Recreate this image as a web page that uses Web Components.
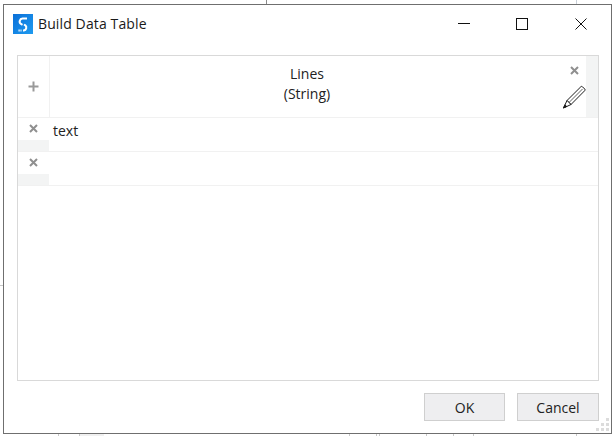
<!DOCTYPE html>
<html>
<head>
<meta charset="utf-8">
<title>Build Data Table</title>
<style>
  html, body { margin: 0; height: 100%; background: #fff; overflow: hidden; }
  body { font-family: "Open Sans", sans-serif; }
</style>
</head>
<body>
<desktop-lines></desktop-lines>
<dialog-window heading="Build Data Table">
  <data-table>
    <table-header name="Lines" type="(String)"></table-header>
    <table-row value="text"></table-row>
    <table-row></table-row>
  </data-table>
  <dialog-button slot="actions">OK</dialog-button>
  <dialog-button slot="actions" style="width:82px">Cancel</dialog-button>
</dialog-window>

<script>
const CROSS = `<svg width="9" height="9" viewBox="0 0 9 9"><path d="M1 1l7 7M8 1l-7 7" stroke="#8f8f8f" stroke-width="2" fill="none"/></svg>`;
const PLUS = `<svg width="11" height="11" viewBox="0 0 11 11"><path d="M5.5 .5v10M.5 5.5h10" stroke="#9a9a9a" stroke-width="2" fill="none"/></svg>`;
const PENCIL = `<svg width="24" height="24" viewBox="0 0 24 24" fill="none" stroke="#1c1c1c" stroke-width="1"><path d="M5 15.5L18.8 1.8a1.2 1.2 0 0 1 1.7 0l2.2 2.2a1.2 1.2 0 0 1 0 1.7L9 19.5z"/><path d="M7 17.5L20.5 4" stroke-width=".7"/><path d="M5 15.5L1.5 23 9 19.5z" fill="#fff"/><path d="M3 19.8L1.5 23l3.2-1.5z" fill="#111"/></svg>`;

// background windows peeking out around the dialog
class DesktopLines extends HTMLElement {
  constructor() {
    super();
    this.attachShadow({ mode: "open" });
    const lines = [
      [266, 0, 1, 4, "#8a8a8a"], [576, 0, 1, 4, "#c9d0d8"], [0, 285, 3, 1, "#c8c8c8"],
      [58, 434, 1, 2, "#c8c8c8"], [79, 434, 1, 2, "#c8c8c8"], [80, 434, 24, 2, "#f0f0f0"],
      [349, 434, 1, 2, "#c8c8c8"], [376, 434, 1, 2, "#c8c8c8"], [379, 434, 1, 2, "#c8c8c8"],
      [426, 434, 1, 2, "#c8c8c8"], [453, 434, 1, 2, "#c8c8c8"], [473, 434, 1, 2, "#c8c8c8"],
      [576, 434, 1, 2, "#c8c8c8"]
    ];
    this.shadowRoot.innerHTML = `
      <style>
        :host { position: absolute; inset: 0; display: block; }
        i { position: absolute; display: block; }
      </style>
      ${lines.map(([x, y, w, h, c]) => `<i style="left:${x}px;top:${y}px;width:${w}px;height:${h}px;background:${c}"></i>`).join("")}
    `;
  }
}

class DialogWindow extends HTMLElement {
  constructor() {
    super();
    this.attachShadow({ mode: "open" });
  }
  connectedCallback() {
    this.shadowRoot.innerHTML = `
      <style>
        :host {
          position: relative;
          display: flex;
          flex-direction: column;
          box-sizing: border-box;
          width: 609px;
          height: 430px;
          margin: 4px 0 0 3px;
          border: 1px solid #6f6f6f;
          background: #fff;
          color: #1a1a1a;
        }
        .title {
          display: flex;
          align-items: center;
          height: 37px;
          flex: none;
          padding-left: 9px;
          font: 14px "Open Sans", sans-serif;
          letter-spacing: .12px;
        }
        .logo { margin-right: 5px; display: block; }
        .name { flex: 1; }
        .btn { width: 46px; height: 37px; display: flex; align-items: center; justify-content: center; }
        .btns { display: flex; margin-right: 7px; }
        .btns .btn:nth-child(2) { margin: 0 13px 0 12px; }
        .body {
          flex: 1;
          display: flex;
          flex-direction: column;
          padding: 13px 12px 12px 13px;
          min-height: 0;
        }
        .foot { display: flex; justify-content: flex-end; gap: 12px; margin-top: 12px; }
        .grip { position: absolute; right: 1px; bottom: 1px; display: block; }
      </style>
      <div class="title">
        <svg class="logo" width="20" height="20" viewBox="0 0 20 20">
          <defs><linearGradient id="g" x1="0" y1="0" x2="1" y2="1">
            <stop offset="0" stop-color="#0a6fd8"/><stop offset="1" stop-color="#1e9bf0"/>
          </linearGradient></defs>
          <rect width="20" height="20" fill="url(#g)"/>
          <path d="M14 4.5H9.5a3 3 0 0 0-1.5 5.5l1.5.8" stroke="#fff" stroke-width="2" fill="none"/>
          <path d="M11 10.5l1.3.8a3 3 0 0 1-1.5 5.2H10" stroke="#fff" stroke-width="2" fill="none"/>
          <path d="M5.5 16.5h3" stroke="#fff" stroke-width="2" stroke-dasharray="1.2 .8" fill="none"/>
        </svg>
        <span class="name">${this.getAttribute("heading")}</span>
        <div class="btns">
          <div class="btn"><svg width="12" height="12" viewBox="0 0 12 12"><path d="M0 5.5h12" stroke="#111"/></svg></div>
          <div class="btn"><svg width="12" height="12" viewBox="0 0 12 12"><rect x=".5" y=".5" width="11" height="11" fill="none" stroke="#111"/></svg></div>
          <div class="btn"><svg width="12" height="12" viewBox="0 0 12 12"><path d="M.5.5l11 11M11.5.5l-11 11" stroke="#111" fill="none"/></svg></div>
        </div>
      </div>
      <div class="body">
        <slot></slot>
        <div class="foot"><slot name="actions"></slot></div>
      </div>
      <svg class="grip" width="14" height="14" viewBox="0 0 14 14" fill="#dcdcdc">
        <rect x="10" y="0" width="3" height="3"/>
        <rect x="5" y="5" width="3" height="3"/><rect x="10" y="5" width="3" height="3"/>
        <rect x="0" y="10" width="3" height="3"/><rect x="5" y="10" width="3" height="3"/><rect x="10" y="10" width="3" height="3"/>
      </svg>
    `;
  }
}

class DataTable extends HTMLElement {
  constructor() {
    super();
    this.attachShadow({ mode: "open" });
    this.shadowRoot.innerHTML = `
      <style>
        :host {
          display: block;
          flex: 1;
          min-height: 0;
          box-sizing: border-box;
          border: 1px solid #d9d9d9;
          background: #fff;
        }
      </style>
      <slot></slot>
    `;
  }
}

class TableHeader extends HTMLElement {
  constructor() {
    super();
    this.attachShadow({ mode: "open" });
  }
  connectedCallback() {
    this.shadowRoot.innerHTML = `
      <style>
        :host {
          display: grid;
          grid-template-columns: 32px 1fr 12px;
          height: 62px;
          font: 14px/20px "Open Sans", sans-serif;
          color: #222;
          border-bottom: 1px solid #f1f1f1;
          box-sizing: border-box;
        }
        .add { display: flex; align-items: center; justify-content: center; border-right: 1px solid #f1f1f1; }
        .col { position: relative; display: flex; flex-direction: column; align-items: center; justify-content: center; padding-right: 22px; }
        .col > div { margin-bottom: 5px; text-align: center; }
        .del { position: absolute; top: 10px; right: 7px; display: flex; }
        .edit { position: absolute; top: 29px; right: 0; display: flex; }
        .rail { background: #f3f4f4; }
      </style>
      <div class="add">${PLUS}</div>
      <div class="col">
        <div>${this.getAttribute("name")}<br>${this.getAttribute("type")}</div>
        <span class="del">${CROSS}</span>
        <span class="edit">${PENCIL}</span>
      </div>
      <div class="rail"></div>
    `;
  }
}

class TableRow extends HTMLElement {
  constructor() {
    super();
    this.attachShadow({ mode: "open" });
  }
  connectedCallback() {
    this.shadowRoot.innerHTML = `
      <style>
        :host {
          display: grid;
          grid-template-columns: 31px 1fr;
          height: 34px;
          box-sizing: border-box;
          border-bottom: 1px solid #f1f1f1;
          font: 14px/26px "Open Sans", sans-serif;
          color: #222;
        }
        .del { display: flex; flex-direction: column; }
        .x { height: 20px; padding-bottom: 2px; flex: none; display: flex; align-items: center; justify-content: center; }
        .pad { flex: 1; background: #f3f4f4; }
        .val { padding-left: 4px; }
      </style>
      <div class="del"><div class="x">${CROSS}</div><div class="pad"></div></div>
      <div class="val">${this.getAttribute("value") || ""}</div>
    `;
  }
}

class DialogButton extends HTMLElement {
  constructor() {
    super();
    this.attachShadow({ mode: "open" });
    this.shadowRoot.innerHTML = `
      <style>
        :host {
          display: flex;
          align-items: center;
          justify-content: center;
          box-sizing: border-box;
          width: 81px;
          height: 28px;
          background: #eeeef0;
          border: 1px solid #cfcfcf;
          font: 14px "Open Sans", sans-serif;
          color: #222;
        }
      </style>
      <slot></slot>
    `;
  }
}

customElements.define("desktop-lines", DesktopLines);
customElements.define("dialog-window", DialogWindow);
customElements.define("data-table", DataTable);
customElements.define("table-header", TableHeader);
customElements.define("table-row", TableRow);
customElements.define("dialog-button", DialogButton);
</script>
</body>
</html>
